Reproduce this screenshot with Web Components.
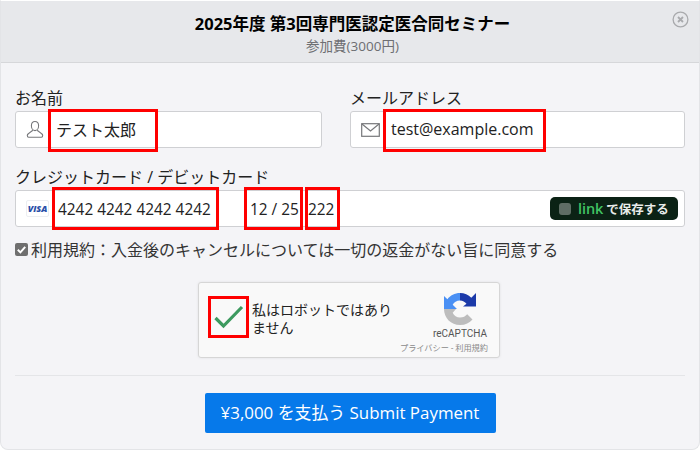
<!DOCTYPE html>
<html lang="ja">
<head>
<meta charset="utf-8">
<style>
  html, body { margin: 0; padding: 0; background: #fff; }
  body { width: 700px; height: 450px; overflow: hidden; font-family: "Open Sans", "Noto Sans CJK JP", sans-serif; color: #222; }
</style>
</head>
<body>
<pay-modal>
  <modal-head slot="head" title-text="2025年度 第3回専門医認定医合同セミナー" sub-text="参加費(3000円)"></modal-head>

  <div slot="row" style="display:flex;gap:28px">
    <text-field label="お名前" style="width:307px" mark-width="110" value="テスト太郎" icon="user"></text-field>
    <text-field label="メールアドレス" style="width:335px" mark-width="163" value="test@example.com" icon="mail"></text-field>
  </div>

  <card-field slot="card"></card-field>
  <terms-check slot="terms">利用規約：入金後のキャンセルについては一切の返金がない旨に同意する</terms-check>
  <robot-check slot="captcha"></robot-check>
  <pay-button slot="submit">¥3,000 を支払う Submit Payment</pay-button>
</pay-modal>

<script>
class PayModal extends HTMLElement {
  constructor() {
    super();
    this.attachShadow({ mode: 'open' });
    this.shadowRoot.innerHTML = `
      <style>
        :host { display: block; width: 700px; height: 450px; box-sizing: border-box; background: #f4f4f7; border: 1px solid #e3e4e7; border-top-color: #fff; border-radius: 0 0 8px 8px; overflow: hidden; }
        .body { display: flex; flex-direction: column; padding: 25px 14px 0; }
        .card { margin-top: 19px; }
        .terms { margin-top: 10px; }
        .captcha { display: flex; justify-content: center; margin-top: 21px; padding-right: 2px; }
        hr { border: 0; border-top: 1px solid #e4e5e8; margin: 17px 0 0; }
        .submit { display: flex; justify-content: center; margin-top: 17px; }
      </style>
      <slot name="head"></slot>
      <div class="body">
        <slot name="row"></slot>
        <div class="card"><slot name="card"></slot></div>
        <div class="terms"><slot name="terms"></slot></div>
        <div class="captcha"><slot name="captcha"></slot></div>
        <hr>
        <div class="submit"><slot name="submit"></slot></div>
      </div>`;
  }
}

class ModalHead extends HTMLElement {
  constructor() {
    super();
    this.attachShadow({ mode: 'open' });
    this.shadowRoot.innerHTML = `
      <style>
        :host { display: block; position: relative; height: 61px; background: #e7e8eb; border-bottom: 1px solid #d6d7da; text-align: center; padding-left: 5px; }
        .t { padding-top: 11px; font-size: 16.500px; line-height: 24px; font-weight: 700; color: #000; }
        .s { font-size: 13.500px; line-height: 18px; color: #6d6e72; margin-top: 1px; }
        svg { position: absolute; right: 10px; top: 10px; }
      </style>
      <div class="t">${this.getAttribute('title-text')}</div>
      <div class="s">${this.getAttribute('sub-text')}</div>
      <svg width="17" height="17" viewBox="0 0 17 17" fill="none" stroke="#a9aaad" stroke-width="1.3">
        <circle cx="8.5" cy="8.5" r="7.4"/>
        <path d="M6 6l5 5M11 6l-5 5" stroke-width="1.8"/>
      </svg>`;
  }
}

const fieldIcons = {
  user: `<svg width="18" height="19" viewBox="0 0 18 19" fill="none" stroke="#77787b" stroke-width="1.1"><path d="M9 1.5c-2.3 0-3.6 1.8-3.6 4.2S6.7 10.6 9 10.6s3.6-2.5 3.6-4.9S11.3 1.5 9 1.5zM6.6 10c.2 1.6-5.3 2.6-5.3 5.6 0 1.2.4 1.7 1.3 1.7h12.8c.9 0 1.3-.5 1.3-1.7 0-3-5.500-4-5.300-5.600"/></svg>`,
  mail: `<svg width="19" height="14" viewBox="0 0 19 14" fill="none" stroke="#77787b" stroke-width="1.2"><rect x=".7" y=".7" width="17.600" height="12.600"/><path d="M1 1l8.500 7L18 1"/></svg>`
};

class RedMark extends HTMLElement {
  constructor() {
    super();
    this.attachShadow({ mode: 'open' });
    this.shadowRoot.innerHTML = `
      <style>
        :host { display: flex; align-items: center; box-sizing: border-box; height: 43px; margin: -3px 0; border: 3px solid #f00; flex: none; }
      </style>
      <slot></slot>`;
  }
}

class TextField extends HTMLElement {
  constructor() {
    super();
    this.attachShadow({ mode: 'open' });
    this.shadowRoot.innerHTML = `
      <style>
        :host { display: block; box-sizing: border-box; flex: none; }
        label { display: block; font-size: 16px; line-height: 20px; height: 20px; color: #222; }
        .box { display: flex; align-items: center; height: 37px; box-sizing: border-box; background: #fff; border: 1px solid #cfd0d3; border-radius: 3px; margin-top: 3px; padding-left: 10px; }
        .icon { display: flex; width: 22px; flex: none; }
        red-mark { width: ${this.getAttribute('mark-width')}px; margin: -2px 0 -4px; font-size: 16px; padding: 0 0 3px 5px; color: #222; }
      </style>
      <label>${this.getAttribute('label')}</label>
      <div class="box">
        <span class="icon">${fieldIcons[this.getAttribute('icon')]}</span>
        <red-mark>${this.getAttribute('value')}</red-mark>
      </div>`;
  }
}

class CardField extends HTMLElement {
  constructor() {
    super();
    this.attachShadow({ mode: 'open' });
    this.shadowRoot.innerHTML = `
      <style>
        :host { display: block; }
        label { display: block; font-size: 16px; line-height: 20px; color: #222; }
        .box { display: flex; align-items: center; height: 37px; box-sizing: border-box; background: #fff; border: 1px solid #cfd0d3; border-radius: 3px; margin-top: 3px; padding-left: 10px; padding-right: 6px; font-size: 15.400px; }
        .visa { display: flex; align-items: center; justify-content: center; width: 23px; height: 17px; box-sizing: border-box; border: 1px solid #eceef1; border-radius: 2px; font: italic 800 9px "Open Sans", sans-serif; color: #2a4fa8; flex: none; margin-right: 3px; }
        .num { width: 167px; padding: 1px 0 0 3px; white-space: nowrap; }
        .exp { width: 59px; margin-left: 25px; padding: 1px 0 0 3px; white-space: nowrap; }
        .cvc { width: 35px; margin-left: 2px; padding: 1px 0 0; }
        link-save { margin-left: auto; }
      </style>
      <label>クレジットカード / デビットカード</label>
      <div class="box">
        <span class="visa">VISA</span>
        <red-mark class="num">4242 4242 4242 4242</red-mark>
        <red-mark class="exp">12 / 25</red-mark>
        <red-mark class="cvc">222</red-mark>
        <link-save></link-save>
      </div>`;
  }
}

class LinkSave extends HTMLElement {
  constructor() {
    super();
    this.attachShadow({ mode: 'open' });
    this.shadowRoot.innerHTML = `
      <style>
        :host { display: flex; align-items: center; box-sizing: border-box; width: 128px; height: 23px; padding-left: 9px; background: #0b2215; border-radius: 5px; font-weight: 700; font-size: 12.500px; color: #e8ece9; white-space: nowrap; }
        i { display: block; width: 12px; height: 12px; border-radius: 3px; background: #5f6d65; margin-right: 7px; flex: none; }
        b { font-size: 14.500px; font-weight: 600; color: #41c463; margin-right: 3px; letter-spacing: -.1px; }
      </style>
      <i></i><b>link</b>で保存する`;
  }
}

class TermsCheck extends HTMLElement {
  constructor() {
    super();
    this.attachShadow({ mode: 'open' });
    this.shadowRoot.innerHTML = `
      <style>
        :host { display: flex; align-items: center; height: 24px; font-size: 16px; color: #333; gap: 3px; }
        .box { width: 13px; height: 13px; border-radius: 2px; background: #6f6f6f; display: flex; flex: none; }
      </style>
      <span class="box"><svg width="13" height="13" viewBox="0 0 13 13" fill="none" stroke="#fff" stroke-width="2"><path d="M2.800 6.800l2.600 2.600 4.800-5.600"/></svg></span>
      <slot></slot>`;
  }
}

class RobotCheck extends HTMLElement {
  constructor() {
    super();
    this.attachShadow({ mode: 'open' });
    this.shadowRoot.innerHTML = `
      <style>
        :host { display: flex; box-sizing: border-box; width: 302px; height: 76px; background: #f9f9f9; border: 1px solid #d6d6d6; border-radius: 3px; box-shadow: 0 0 3px rgba(0,0,0,.08); font-family: Roboto, "Noto Sans CJK JP", sans-serif; }
        .tick { margin: 13px 0 0 9px; width: 41px; height: 42px; display: flex; align-items: center; justify-content: center; }
        .label { width: 146px; margin-left: 3px; font-size: 14px; line-height: 18px; color: #222; padding-top: 18px; }
        .logo { margin-left: auto; display: flex; flex-direction: column; align-items: flex-end; padding: 10px 11px 0 0; box-sizing: border-box; }
        .logo svg { margin-right: 12px; }
        .rc { font-size: 10px; line-height: 12px; color: #555; margin: 3px 1px 0 0; }
        .legal { font-size: 8.200px; line-height: 10px; color: #8a8a8a; margin-top: 3px; white-space: nowrap; }
      </style>
      <red-mark class="tick">
        <svg width="30" height="24" viewBox="0 0 30 24" fill="none" stroke="#3d9a5f" stroke-width="3.200"><path d="M1.500 13l8 8L28 2"/></svg>
      </red-mark>
      <div class="label">私はロボットではありません</div>
      <div class="logo">
        <svg width="32" height="32" viewBox="0 0 32 32">
          <path fill="#1c3aa9" d="M16 0v7.500c2.800 0 4.900 1.300 6.500 3.300L19 13.500h13V0l-4.700 4.700C24.400 1.800 20.500 0 16 0z"/>
          <path fill="#4a90f4" d="M16 0C10.700 0 6.300 2.400 3.400 6.200L0 3v13h13l-4.300-4.300C10 9.300 12.600 7.500 16 7.500V0z"/>
          <path fill="#bdbdbd" d="M0 16c0 9 7 16 16 16 5.500 0 9.500-2 12.500-5.500l-5.300-5.300c-1.700 2-4 3.300-7.200 3.300-3.300 0-6-2-7.300-4.800L12 16H0z"/>
        </svg>
        <div class="rc">reCAPTCHA</div>
        <div class="legal">プライバシー - 利用規約</div>
      </div>`;
  }
}

class PayButton extends HTMLElement {
  constructor() {
    super();
    this.attachShadow({ mode: 'open' });
    this.shadowRoot.innerHTML = `
      <style>
        :host { display: flex; align-items: center; justify-content: center; box-sizing: border-box; width: 291px; height: 40px; padding-bottom: 3px; background: #0679ea; border-radius: 2px; color: #fff; font-size: 16.900px; white-space: nowrap; }
      </style>
      <slot></slot>`;
  }
}

customElements.define('red-mark', RedMark);
customElements.define('pay-modal', PayModal);
customElements.define('modal-head', ModalHead);
customElements.define('text-field', TextField);
customElements.define('card-field', CardField);
customElements.define('link-save', LinkSave);
customElements.define('terms-check', TermsCheck);
customElements.define('robot-check', RobotCheck);
customElements.define('pay-button', PayButton);
</script>
</body>
</html>
